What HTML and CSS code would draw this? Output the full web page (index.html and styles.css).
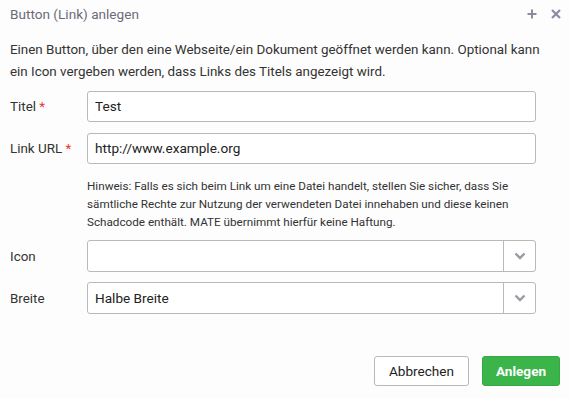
FILE: index.html
```html
<!DOCTYPE html>
<html lang="de">
<head>
<meta charset="utf-8">
<link rel="stylesheet" href="styles.css">
</head>
<body>
<div class="dialog">
  <div class="header">
    <span class="title">Button (Link) anlegen</span>
    <div class="tools">
      <svg class="tool" width="10" height="10" viewBox="0 0 10 10"><path d="M5 0.5V9.5M0.5 5H9.5" stroke="#8b8ca3" stroke-width="2"/></svg>
      <svg class="tool" width="10" height="10" viewBox="0 0 10 10"><path d="M1 1L9 9M9 1L1 9" stroke="#8b8ca3" stroke-width="2.2"/></svg>
    </div>
  </div>
  <p class="desc">Einen Button, über den eine Webseite/ein Dokument geöffnet werden kann. Optional kann ein Icon vergeben werden, dass Links des Titels angezeigt wird.</p>
  <div class="form">
    <div class="row">
      <label class="label">Titel <span class="req">*</span></label>
      <div class="field input">Test</div>
    </div>
    <div class="row">
      <label class="label">Link URL <span class="req">*</span></label>
      <div class="field input">http://www.example.org</div>
    </div>
    <p class="hint">Hinweis: Falls es sich beim Link um eine Datei handelt, stellen Sie sicher, dass Sie sämtliche Rechte zur Nutzung der verwendeten Datei innehaben und diese keinen Schadcode enthält. MATE übernimmt hierfür keine Haftung.</p>
    <div class="row sel-row">
      <label class="label">Icon</label>
      <div class="field select"><span class="val"></span><span class="arrow"><svg width="12" height="8" viewBox="0 0 12 8"><path d="M1.5 1.5L6 6L10.5 1.5" fill="none" stroke="#9a9aa6" stroke-width="2.4"/></svg></span></div>
    </div>
    <div class="row sel-row">
      <label class="label">Breite</label>
      <div class="field select"><span class="val">Halbe Breite</span><span class="arrow"><svg width="12" height="8" viewBox="0 0 12 8"><path d="M1.5 1.5L6 6L10.5 1.5" fill="none" stroke="#9a9aa6" stroke-width="2.4"/></svg></span></div>
    </div>
  </div>
  <div class="footer">
    <button class="btn cancel">Abbrechen</button>
    <button class="btn primary">Anlegen</button>
  </div>
</div>
</body>
</html>
```
FILE: styles.css
```css
html, body {
  margin: 0;
  padding: 0;
  background: #fdfdfd;
}
body {
  font-family: Roboto, "Liberation Sans", sans-serif;
  color: #333;
  font-size: 13.5px;
}
.dialog {
  width: 570px;
  height: 398px;
  display: flex;
  flex-direction: column;
}
.header {
  height: 28px;
  display: flex;
  align-items: center;
  justify-content: space-between;
  padding: 0 9px 0 10px;
}
.title {
  color: #6b6b78;
  font-size: 13.6px;
  line-height: 28px;
}
.tools {
  display: flex;
  gap: 14px;
  align-items: center;
}
.tool {
  display: block;
}
.desc {
  margin: 11px 0 0 0;
  padding: 0 10px;
  line-height: 22px;
  font-size: 13.4px;
  color: #333;
}
.form {
  margin-top: 8px;
  padding: 0 34px 0 10px;
  display: flex;
  flex-direction: column;
}
.row {
  display: flex;
  align-items: center;
  margin-bottom: 11px;
}
.label {
  width: 77px;
  flex: none;
  font-size: 13.4px;
  color: #333;
}
.req {
  color: #e8363c;
}
.field {
  flex: 1;
  height: 31px;
  box-sizing: border-box;
  border: 1px solid #b9b9b9;
  border-radius: 3px;
  background: #fff;
}
.input {
  padding: 0 7px;
  line-height: 29px;
  font-size: 13.6px;
  color: #222;
}
.hint {
  margin: 2px 0 0 77px;
  font-size: 11.7px;
  line-height: 18px;
  color: #333;
}
.sel-row {
  margin-bottom: 10px;
}
.hint + .sel-row {
  margin-top: 9px;
}
.select {
  height: 32px;
  display: flex;
  align-items: stretch;
}
.select .val {
  flex: 1;
  padding: 0 7px;
  line-height: 30px;
  font-size: 13.6px;
  color: #222;
}
.select .arrow {
  width: 31px;
  border-left: 1px solid #b9b9b9;
  display: flex;
  align-items: center;
  justify-content: center;
}
.select .arrow svg {
  display: block;
}
.footer {
  margin-top: auto;
  margin-bottom: 12px;
  padding: 0 10px;
  display: flex;
  justify-content: flex-end;
  gap: 13px;
}
.btn {
  font-family: Roboto, "Liberation Sans", sans-serif;
  font-size: 13.6px;
  height: 30px;
  border-radius: 3px;
  box-sizing: border-box;
  cursor: pointer;
}
.cancel {
  width: 95px;
  background: #fff;
  color: #222;
  border: 1px solid #b9b9b9;
}
.primary {
  width: 78px;
  background: #3bb54a;
  border: 1px solid #35a843;
  color: #fff;
  font-weight: bold;
}
```
